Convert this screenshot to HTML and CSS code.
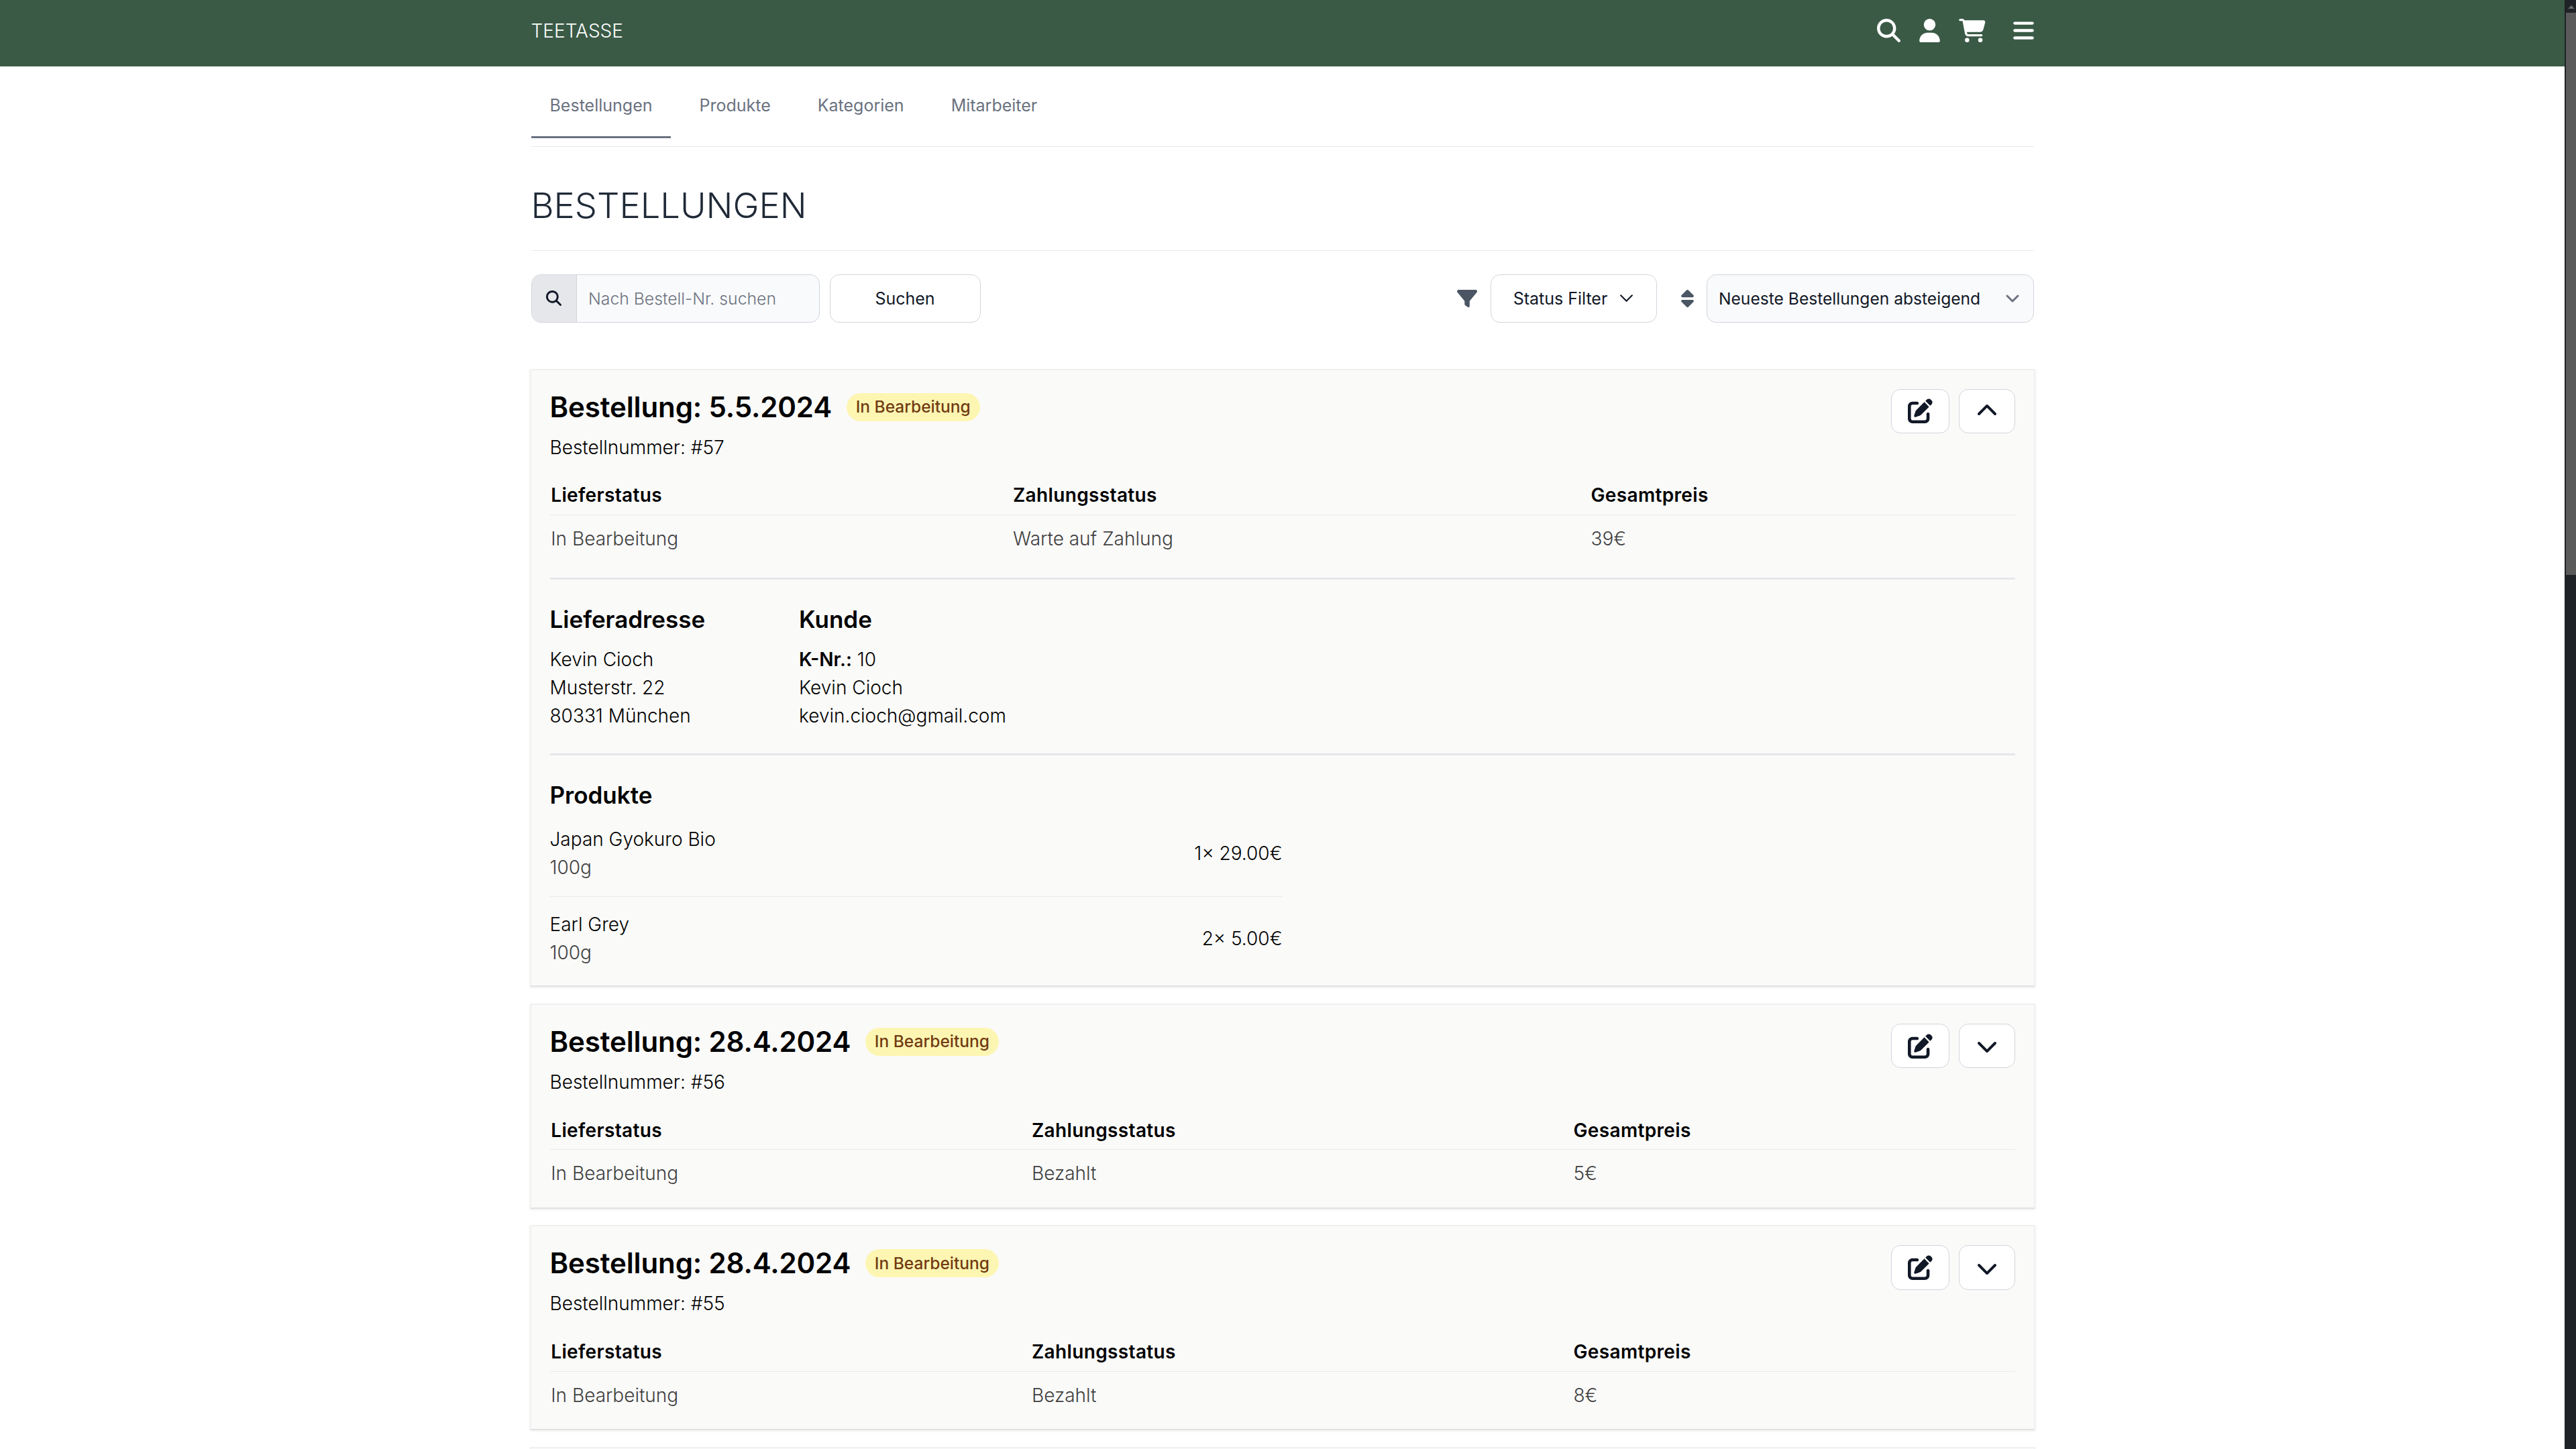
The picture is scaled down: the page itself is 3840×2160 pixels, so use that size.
FILE: index.html
```html
<!DOCTYPE html>
<html lang="de">
<head>
<meta charset="utf-8">
<title>Teetasse – Bestellungen</title>
<link rel="stylesheet" href="styles.css">
</head>
<body>
<svg class="defs" width="0" height="0" aria-hidden="true">
  <symbol id="i-search" viewBox="0 0 512 512"><path d="M416 208c0 45.9-14.9 88.3-40 122.7L502.6 457.4c12.5 12.5 12.5 32.8 0 45.3s-32.8 12.5-45.3 0L330.7 376c-34.4 25.2-76.8 40-122.7 40C93.1 416 0 322.9 0 208S93.1 0 208 0S416 93.1 416 208zM208 352a144 144 0 1 0 0-288 144 144 0 1 0 0 288z"/></symbol>
  <symbol id="i-user" viewBox="0 0 448 512"><path d="M224 256A128 128 0 1 0 224 0a128 128 0 1 0 0 256zm-45.7 48C79.8 304 0 383.8 0 482.3C0 498.7 13.3 512 29.7 512H418.3c16.4 0 29.7-13.3 29.7-29.7C448 383.8 368.2 304 269.7 304H178.3z"/></symbol>
  <symbol id="i-cart" viewBox="0 0 576 512"><path d="M0 24C0 10.7 10.7 0 24 0H69.5c22 0 41.5 12.8 50.6 32h411c26.3 0 45.5 25 38.6 50.4l-41 152.3c-8.5 31.4-37 53.3-69.5 53.3H170.7l5.4 28.5c2.2 11.3 12.1 19.5 23.6 19.5H488c13.3 0 24 10.7 24 24s-10.7 24-24 24H199.7c-34.6 0-64.3-24.6-70.7-58.5L77.4 54.5c-.7-3.8-4-6.5-7.9-6.5H24C10.7 48 0 37.3 0 24zM128 464a48 48 0 1 1 96 0 48 48 0 1 1 -96 0zm336-48a48 48 0 1 1 0 96 48 48 0 1 1 0-96z"/></symbol>
  <symbol id="i-bars" viewBox="0 0 448 512"><path d="M0 96C0 78.3 14.3 64 32 64H416c17.7 0 32 14.3 32 32s-14.3 32-32 32H32C14.3 128 0 113.7 0 96zM0 256c0-17.7 14.3-32 32-32H416c17.7 0 32 14.3 32 32s-14.3 32-32 32H32c-17.7 0-32-14.3-32-32zM448 416c0 17.7-14.3 32-32 32H32c-17.7 0-32-14.3-32-32s14.3-32 32-32H416c17.7 0 32 14.3 32 32z"/></symbol>
  <symbol id="i-filter" viewBox="0 0 512 512"><path d="M3.9 54.9C10.5 40.9 24.5 32 40 32H472c15.5 0 29.5 8.9 36.1 22.9s4.6 30.5-5.2 42.5L320 320.9V448c0 12.1-6.8 23.2-17.7 28.6s-23.8 4.3-33.5-3l-64-48c-8.1-6-12.8-15.5-12.8-25.6V320.9L9 97.3C-.7 85.4-2.8 68.8 3.9 54.9z"/></symbol>
  <symbol id="i-sort" viewBox="0 0 320 512"><path d="M137.4 41.4c12.5-12.5 32.8-12.5 45.3 0l128 128c9.2 9.2 11.9 22.9 6.9 34.9s-16.6 19.8-29.6 19.8H32c-12.9 0-24.6-7.8-29.6-19.8s-2.2-25.7 6.9-34.9l128-128zm0 429.3l-128-128c-9.2-9.2-11.9-22.9-6.9-34.9s16.6-19.8 29.6-19.8H288c12.9 0 24.6 7.8 29.6 19.8s2.2 25.7-6.9 34.9l-128 128c-12.5 12.5-32.8 12.5-45.3 0z"/></symbol>
  <symbol id="i-edit" viewBox="0 0 512 512"><path d="M471.6 21.7c-21.9-21.9-57.3-21.9-79.2 0L362.3 51.7l97.9 97.9 30.1-30.1c21.9-21.9 21.9-57.3 0-79.2L471.6 21.7zm-299.2 220c-6.1 6.1-10.8 13.6-13.5 21.9l-29.6 88.8c-2.9 8.6-.6 18.1 5.8 24.6s15.9 8.7 24.6 5.8l88.8-29.6c8.2-2.7 15.7-7.4 21.9-13.5L437.7 172.3 339.7 74.3 172.4 241.7zM96 64C43 64 0 107 0 160V416c0 53 43 96 96 96H352c53 0 96-43 96-96V320c0-17.7-14.3-32-32-32s-32 14.3-32 32v96c0 17.7-14.3 32-32 32H96c-17.7 0-32-14.3-32-32V160c0-17.7 14.3-32 32-32h96c17.7 0 32-14.3 32-32s-14.3-32-32-32H96z"/></symbol>
  <symbol id="i-up" viewBox="0 0 512 512"><path d="M233.4 105.4c12.5-12.5 32.8-12.5 45.3 0l192 192c12.5 12.5 12.5 32.8 0 45.3s-32.8 12.5-45.3 0L256 173.3 86.6 342.6c-12.5 12.5-32.8 12.5-45.3 0s-12.5-32.8 0-45.3l192-192z"/></symbol>
  <symbol id="i-down" viewBox="0 0 512 512"><path d="M233.4 406.6c12.5 12.5 32.8 12.5 45.3 0l192-192c12.5-12.5 12.5-32.8 0-45.3s-32.8-12.5-45.3 0L256 338.7 86.6 169.4c-12.5-12.5-32.8-12.5-45.3 0s-12.5 32.8 0 45.3l192 192z"/></symbol>
</svg>
<div class="viewport">
  <div class="page">
    <header class="topbar">
      <div class="topbar-inner">
        <a class="brand">TEETASSE</a>
        <div class="topbar-icons">
          <svg class="ti ti-search"><use href="#i-search"/></svg>
          <svg class="ti ti-user"><use href="#i-user"/></svg>
          <svg class="ti ti-cart"><use href="#i-cart"/></svg>
          <svg class="ti ti-bars"><use href="#i-bars"/></svg>
        </div>
      </div>
    </header>
    <main class="container">
      <nav class="tabs">
        <a class="tab tab-active">Bestellungen</a>
        <a class="tab">Produkte</a>
        <a class="tab">Kategorien</a>
        <a class="tab">Mitarbeiter</a>
      </nav>
      <h1 class="page-title">BESTELLUNGEN</h1>
      <div class="toolbar">
        <div class="search-group">
          <span class="addon"><svg class="addon-icon"><use href="#i-search"/></svg></span>
          <input class="search-input" type="text" placeholder="Nach Bestell-Nr. suchen">
        </div>
        <button class="btn-search">Suchen</button>
        <div class="toolbar-right">
          <svg class="filter-icon"><use href="#i-filter"/></svg>
          <button class="btn-status">Status Filter
            <svg class="mini-chevron" viewBox="0 0 10 6" fill="none"><path d="m1 1 4 4 4-4" stroke="currentColor" stroke-linecap="round" stroke-linejoin="round" stroke-width="1"/></svg>
          </button>
          <svg class="sort-icon"><use href="#i-sort"/></svg>
          <div class="sort-select">
            <span>Neueste Bestellungen absteigend</span>
            <svg class="select-chevron" viewBox="0 0 20 20" fill="none"><path d="M6 8l4 4 4-4" stroke="#6B7280" stroke-linecap="round" stroke-linejoin="round" stroke-width="1.5"/></svg>
          </div>
        </div>
      </div>

      <section class="card">
        <div class="card-head">
          <div>
            <div class="title-row"><h2 class="order-title">Bestellung: 5.5.2024</h2><span class="badge">In Bearbeitung</span></div>
            <p class="order-no">Bestellnummer: #57</p>
          </div>
          <div class="actions">
            <button class="icon-btn edit"><svg class="ic-edit"><use href="#i-edit"/></svg></button>
            <button class="icon-btn toggle"><svg class="ic-chev"><use href="#i-up"/></svg></button>
          </div>
        </div>
        <table class="summary summary-open">
          <colgroup><col class="col-a"><col class="col-b"><col></colgroup>
          <thead><tr><th>Lieferstatus</th><th>Zahlungsstatus</th><th>Gesamtpreis</th></tr></thead>
          <tbody><tr><td>In Bearbeitung</td><td>Warte auf Zahlung</td><td>39€</td></tr></tbody>
        </table>
        <div class="details">
          <div class="info-col">
            <h3 class="sub">Lieferadresse</h3>
            <p>Kevin Cioch</p><p>Musterstr. 22</p><p>80331 München</p>
          </div>
          <div class="info-col">
            <h3 class="sub">Kunde</h3>
            <p><b>K-Nr.:</b> 10</p><p>Kevin Cioch</p><p>kevin.cioch@gmail.com</p>
          </div>
        </div>
        <div class="products">
          <h3 class="sub">Produkte</h3>
          <ul class="product-list">
            <li class="product"><div><p class="p-name">Japan Gyokuro Bio</p><p class="p-size">100g</p></div><span class="p-price">1× 29.00€</span></li>
            <li class="product"><div><p class="p-name">Earl Grey</p><p class="p-size">100g</p></div><span class="p-price">2× 5.00€</span></li>
          </ul>
        </div>
      </section>

      <section class="card">
        <div class="card-head">
          <div>
            <div class="title-row"><h2 class="order-title">Bestellung: 28.4.2024</h2><span class="badge">In Bearbeitung</span></div>
            <p class="order-no">Bestellnummer: #56</p>
          </div>
          <div class="actions">
            <button class="icon-btn edit"><svg class="ic-edit"><use href="#i-edit"/></svg></button>
            <button class="icon-btn toggle"><svg class="ic-chev"><use href="#i-down"/></svg></button>
          </div>
        </div>
        <table class="summary summary-closed">
          <colgroup><col class="col-a"><col class="col-b"><col></colgroup>
          <thead><tr><th>Lieferstatus</th><th>Zahlungsstatus</th><th>Gesamtpreis</th></tr></thead>
          <tbody><tr><td>In Bearbeitung</td><td>Bezahlt</td><td>5€</td></tr></tbody>
        </table>
      </section>

      <section class="card">
        <div class="card-head">
          <div>
            <div class="title-row"><h2 class="order-title">Bestellung: 28.4.2024</h2><span class="badge">In Bearbeitung</span></div>
            <p class="order-no">Bestellnummer: #55</p>
          </div>
          <div class="actions">
            <button class="icon-btn edit"><svg class="ic-edit"><use href="#i-edit"/></svg></button>
            <button class="icon-btn toggle"><svg class="ic-chev"><use href="#i-down"/></svg></button>
          </div>
        </div>
        <table class="summary summary-closed">
          <colgroup><col class="col-a"><col class="col-b"><col></colgroup>
          <thead><tr><th>Lieferstatus</th><th>Zahlungsstatus</th><th>Gesamtpreis</th></tr></thead>
          <tbody><tr><td>In Bearbeitung</td><td>Bezahlt</td><td>8€</td></tr></tbody>
        </table>
      </section>

      <section class="card card-peek"></section>
    </main>
  </div>
  <aside class="scrollbar">
    <span class="scroll-arrow"></span>
    <span class="scroll-thumb"></span>
  </aside>
</div>
</body>
</html>
```

FILE: styles.css
```css
* { box-sizing: border-box; }
html, body { margin: 0; padding: 0; height: 100%; }
body {
  font-family: "Inter", "Liberation Sans", sans-serif;
  font-size: 28px;
  line-height: 42px;
  font-weight: 300;
  color: #000;
  background: #fff;
}
p, h1, h2, h3, ul { margin: 0; padding: 0; }
ul { list-style: none; }
button { font-family: inherit; cursor: pointer; }
.defs { position: absolute; }

.viewport { display: flex; height: 100vh; overflow: hidden; }
.page { flex: 1; min-width: 0; }

.topbar { background: #3a5a46; height: 99px; color: #fff; }
.topbar-inner {
  width: 2240px; margin: 0 auto; height: 91px;
  display: flex; align-items: center; justify-content: space-between;
}
.brand { font-size: 28px; font-weight: 300; }
.topbar-icons { display: flex; align-items: center; }
.ti { fill: #fff; height: 35px; display: block; }
.ti-search { width: 35px; margin-right: 28px; }
.ti-user { width: 31px; margin-right: 28px; }
.ti-cart { width: 40px; margin-right: 41px; }
.ti-bars { width: 31px; }

.container { width: 2240px; margin: 0 auto; }

.tabs {
  display: flex; gap: 14px;
  padding-top: 12.25px; padding-bottom: 12px;
  border-bottom: 1px solid #e9eaec;
}
.tab {
  padding: 29px 28px 27px; height: 94.5px;
  font-size: 25px; line-height: 35px; font-weight: 400;
  color: #6b7280;
  border-bottom: 3px solid transparent;
}
.tab-active { border-bottom-color: #6b7280; }

.page-title {
  font-size: 52.5px; line-height: 63px; font-weight: 300;
  color: #1f2937;
  padding: 56px 0 35px;
  border-bottom: 1px solid #e9eaec;
}

.toolbar { display: flex; align-items: center; margin-top: 35px; margin-bottom: 68.75px; }
.search-group {
  display: flex; width: 430px; height: 72px;
  border: 1px solid #d1d5db; border-radius: 14px; overflow: hidden;
  background: #f9fafb;
}
.addon {
  width: 67px; background: #e5e7eb; border-right: 1px solid #d1d5db;
  display: flex; align-items: center; justify-content: center;
}
.addon-icon { width: 23px; height: 23px; fill: #111827; }
.search-input {
  flex: 1; min-width: 0; border: 0; background: transparent; outline: none;
  padding: 0 17.5px; font: 300 24.75px "Inter", sans-serif; color: #111827;
}
.search-input::placeholder { color: #6b7280; opacity: 1; }
.btn-search {
  margin-left: 15px; width: 225px; height: 72px;
  background: #fff; border: 1px solid #d1d5db; border-radius: 14px;
  font-size: 25px; font-weight: 400; color: #111827;
}
.toolbar-right { margin-left: auto; display: flex; align-items: center; }
.filter-icon { width: 30px; height: 30px; fill: #4b5563; margin-right: 20px; }
.btn-status {
  width: 248px; height: 72px;
  background: #fff; border: 1px solid #d1d5db; border-radius: 14px;
  font-size: 25px; font-weight: 400; color: #111827;
  display: flex; align-items: center; justify-content: center; gap: 18px;
}
.mini-chevron { width: 21px; height: 13px; }
.sort-icon { width: 19px; height: 30px; fill: #4b5563; margin: 0 19px 0 36px; }
.sort-select {
  width: 488px; height: 72px;
  background: #f9fafb; border: 1px solid #d1d5db; border-radius: 14px;
  padding: 0 11px 0 17.5px; font-size: 24.6px; font-weight: 400; color: #111827;
  display: flex; align-items: center; justify-content: space-between;
}
.select-chevron { width: 40px; height: 40px; }

.card {
  background: #fafaf9;
  border: 2px solid #f0f0f0;
  border-bottom-color: #e2e2e2;
  box-shadow: 0 1.75px 3.5px rgba(0, 0, 0, .08);
  padding: 28px 28px 0;
  margin: 0 -2px 24.5px;
}
.card-peek { height: 200px; }
.card-head { display: flex; justify-content: space-between; align-items: flex-start; }
.title-row { display: flex; align-items: center; gap: 21.5px; height: 54px; }
.order-title { font-size: 42px; line-height: 54px; font-weight: 600; letter-spacing: -0.12px; color: #000; }
.badge {
  font-size: 24.5px; line-height: 35px; font-weight: 500;
  color: #723b13; background: #fdf6b2;
  padding: 3.5px 14px; border-radius: 21px;
}
.order-no { margin-top: 12px; color: #000; }
.actions { display: flex; gap: 14px; }
.icon-btn {
  height: 66.5px; background: #fff;
  border: 1px solid #d1d5db; border-radius: 14px;
  display: flex; align-items: center; justify-content: center; padding: 0;
}
.edit { width: 87px; }
.toggle { width: 84px; }
.ic-edit { width: 37px; height: 37px; fill: #111827; }
.ic-chev { width: 32px; height: 32px; fill: #111827; }

.summary { width: 100%; table-layout: fixed; border-collapse: separate; border-spacing: 0; margin-top: 15.75px; }
.summary-open .col-a { width: 688.75px; }
.summary-open .col-b { width: 861.5px; }
.summary-closed .col-a { width: 716.75px; }
.summary-closed .col-b { width: 807.5px; }
.summary th {
  text-align: left; font-weight: 600; color: #000; letter-spacing: 0.35px;
  padding: 14px 1.75px 7.5px;
  border-bottom: 1px solid #e9eaec;
}
.summary td { color: #404040; padding: 14px 1.75px 29.75px; }

.details {
  display: flex; gap: 140px; margin-top: 7.5px;
  border-top: 3px solid #e5e7eb; padding: 33px 0 35.8px;
}
.sub { font-size: 35px; line-height: 52px; font-weight: 600; color: #000; }
.info-col .sub { margin-bottom: 12.5px; }
.info-col b { font-weight: 600; }
.products { border-top: 3px solid #e5e7eb; padding-top: 32.3px; }
.product-list { width: 50%; margin-top: 19.7px; }
.product {
  display: flex; justify-content: space-between; align-items: center;
  padding: 19.8px 0 22px;
  border-bottom: 1px solid #e9eaec;
}
.product:first-child { padding-top: 0; }
.product:last-child { border-bottom: 0; padding-bottom: 28.4px; }
.p-size { color: #404040; }
.p-name { color: #000; }
.p-price { color: #000; }

.scrollbar {
  width: 17px; flex: none; background: #1f2226; position: relative;
  display: flex; flex-direction: column; align-items: flex-end;
}
.scroll-arrow {
  position: absolute; left: 5px; top: 8px; width: 0; height: 0;
  border-left: 5px solid transparent; border-right: 5px solid transparent;
  border-bottom: 5px solid #6a6a6a;
}
.scroll-thumb { margin-top: 19px; width: 15px; height: 838px; background: #5a5a5a; }
```
